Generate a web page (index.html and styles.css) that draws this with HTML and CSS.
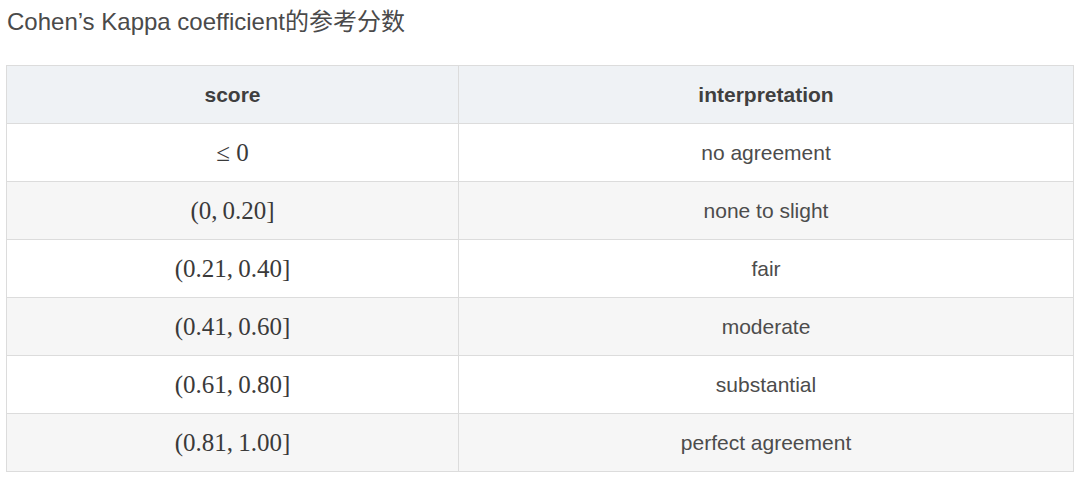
FILE: index.html
```html
<!DOCTYPE html>
<html>
<head>
<meta charset="utf-8">
<link rel="stylesheet" href="styles.css">
</head>
<body>
<p class="title">Cohen’s Kappa coefficient的参考分数</p>
<table class="kappa">
  <thead>
    <tr><th class="c1">score</th><th>interpretation</th></tr>
  </thead>
  <tbody>
    <tr><td class="math">≤ 0</td><td>no agreement</td></tr>
    <tr><td class="math">(0,&thinsp;0.20]</td><td>none to slight</td></tr>
    <tr><td class="math">(0.21,&thinsp;0.40]</td><td>fair</td></tr>
    <tr><td class="math">(0.41,&thinsp;0.60]</td><td>moderate</td></tr>
    <tr><td class="math">(0.61,&thinsp;0.80]</td><td>substantial</td></tr>
    <tr><td class="math">(0.81,&thinsp;1.00]</td><td>perfect agreement</td></tr>
  </tbody>
</table>
</body>
</html>
```
FILE: styles.css
```css
html, body { margin: 0; padding: 0; background: #fff; }
body {
  padding: 0 12px 0 6px;
  font-family: "Liberation Sans", Arial, "Noto Sans CJK SC", sans-serif;
  color: #4c4c4c;
}
.title {
  margin: 6px 0 0 1px;
  font-size: 24px;
  line-height: 32px;
  color: #4a4a4a;
}
.kappa {
  margin-top: 27px;
  width: 1068px;
  border-collapse: collapse;
  font-size: 21px;
}
.kappa th, .kappa td {
  border: 1px solid #dcdcdc;
  height: 57px;
  padding: 0;
  text-align: center;
  vertical-align: middle;
}
.kappa th {
  background: #eff2f5;
  font-weight: bold;
  color: #3f3f3f;
}
.kappa .c1 { width: 451px; }
.kappa tbody tr:nth-child(even) td { background: #f6f6f6; }
.kappa .math {
  font-family: "Liberation Serif", "Times New Roman", serif;
  font-size: 25px;
  color: #3a3a3a;
}
```
